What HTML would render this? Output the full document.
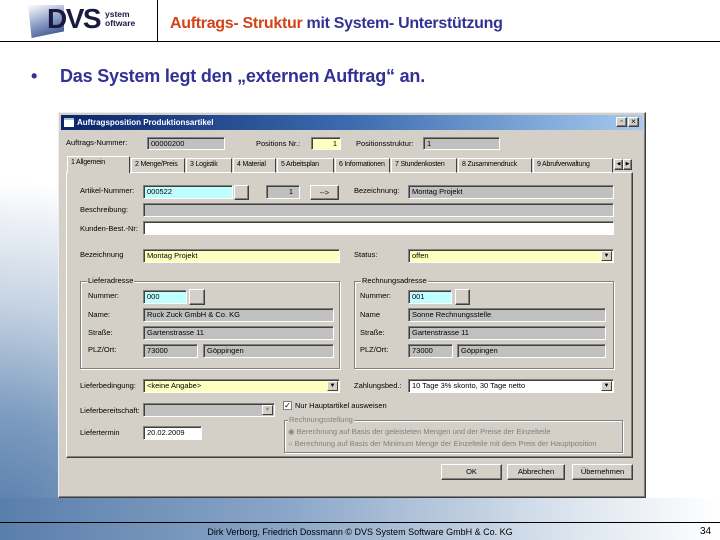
<!DOCTYPE html>
<html><head><meta charset="utf-8"><style>
*{margin:0;padding:0;box-sizing:border-box}
body{width:720px;height:540px;position:relative;overflow:hidden;background:#fff;font-family:"Liberation Sans",sans-serif}
.a{position:absolute}
.bg1{left:0;top:180px;width:320px;height:360px;background:radial-gradient(ellipse 100% 100% at 0% 100%,#4f78a8 0%,#7d9cc0 35%,#c4d2e2 65%,rgba(255,255,255,0) 100%)}
.bg2{left:0;top:498px;width:720px;height:42px;background:linear-gradient(90deg,#5a7eab 0%,#8aa6c8 40%,#dde6ef 80%,#fff 100%)}
.dlg{left:58px;top:112px;width:588px;height:386px;background:#d4d0c8;border:1px solid;border-color:#eee #404040 #404040 #eee;box-shadow:inset -1px -1px #808080}
.tb{left:61px;top:115px;width:582px;height:15px;background:linear-gradient(90deg,#0a246a,#3c6cb0 50%,#a6caf0)}
.t{font-size:7.5px;color:#000;white-space:nowrap;line-height:10px}
.f{position:absolute;border:1px solid;border-color:#808080 #fff #fff #808080;box-shadow:inset 1px 1px #404040;font-size:7.5px;line-height:11px;padding-left:3px;white-space:nowrap;overflow:hidden}
.g{background:#c0c0c0}.y{background:#ffffc0}.c{background:#c0ffff}.w{background:#fff}
.b{position:absolute;background:#d4d0c8;border:1px solid;border-color:#fff #404040 #404040 #fff;box-shadow:inset -1px -1px #808080;font-size:7.5px;text-align:center;line-height:13px}
.dd{position:absolute;right:1px;top:1px;width:11px;bottom:1px;background:#d4d0c8;border:1px solid;border-color:#fff #404040 #404040 #fff;font-size:6px;text-align:center;line-height:9px}
.grp{position:absolute;border:1px solid #808080;box-shadow:1px 1px #fff, inset 1px 1px #fff}
.gl{position:absolute;top:-6px;left:6px;background:#d4d0c8;padding:0 1px;font-size:7.5px;line-height:10px}
.tab{position:absolute;top:158px;height:15px;border:1px solid;border-color:#fff #404040 transparent #fff;font-size:7px;line-height:12px;padding-left:3px;white-space:nowrap;overflow:hidden;letter-spacing:-0.2px}
</style></head><body>
<div class="a bg1"></div><div class="a bg2"></div>
<!-- header -->
<div class="a" style="left:28px;top:5px;width:36px;height:33px;background:linear-gradient(160deg,#fff,#8094c0 55%,#2a3f80);clip-path:polygon(0 0,100% 0,100% 80%,10% 100%)"></div>
<div class="a" style="left:47px;top:4px;font:bold 28px/30px 'Liberation Sans',sans-serif;color:#1a1a40;letter-spacing:-1.5px">DVS</div>
<div class="a" style="left:105px;top:10px;font:bold 8.5px/9px 'Liberation Sans',sans-serif;color:#1a1a40">ystem<br>oftware</div>
<div class="a" style="left:157px;top:0;width:1px;height:42px;background:#000"></div>
<div class="a" style="left:0;top:41px;width:720px;height:1px;background:#000"></div>
<div class="a" style="left:170px;top:14px;font:bold 16px/20px 'Liberation Sans',sans-serif;color:#323296;letter-spacing:-0.3px"><span style="color:#d44218">Auftrags- Struktur</span> mit System- Unterstützung</div>
<div class="a" style="left:31px;top:64px;font:bold 18px/24px 'Liberation Sans',sans-serif;color:#323296">•</div>
<div class="a" style="left:60px;top:64px;font:bold 18px/24px 'Liberation Sans',sans-serif;color:#323296;letter-spacing:-0.2px">Das System legt den „externen Auftrag“ an.</div>
<!-- footer -->
<div class="a" style="left:0;top:522px;width:720px;height:1px;background:#000"></div>
<div class="a" style="left:0;top:526px;width:720px;text-align:center;font:9px/12px 'Liberation Sans',sans-serif;color:#000">Dirk Verborg, Friedrich Dossmann © DVS System Software GmbH &amp; Co. KG</div>
<div class="a" style="left:700px;top:526px;font:10px/12px 'Liberation Sans',sans-serif">34</div>
<!-- dialog -->
<div class="a dlg"></div>
<div class="a tb"></div>
<div class="a" style="left:64px;top:118px;width:10px;height:9px;background:#fff;border-top:2px solid #9cc"></div>
<div class="a" style="left:77px;top:116px;font:bold 8px/13px 'Liberation Sans',sans-serif;color:#fff">Auftragsposition Produktionsartikel</div>
<div class="b" style="left:616px;top:117px;width:11px;height:10px;line-height:8px;font-size:7px">▫</div>
<div class="b" style="left:628px;top:117px;width:11px;height:10px;line-height:8px;font-size:8px">×</div>
<div class="a t" style="left:66px;top:138px">Auftrags-Nummer:</div>
<div class="f g" style="left:147px;top:137px;width:78px;height:13px">00000200</div>
<div class="a t" style="left:256px;top:139px">Positions Nr.:</div>
<div class="f y" style="left:311px;top:137px;width:30px;height:13px;text-align:right;padding-right:3px">1</div>
<div class="a t" style="left:356px;top:139px">Positionsstruktur:</div>
<div class="f g" style="left:423px;top:137px;width:77px;height:13px">1</div>
<!-- tabs -->
<div class="a" style="left:66px;top:172px;width:567px;height:286px;border:1px solid;border-color:#fff #404040 #404040 #fff;box-shadow:inset -1px -1px #808080"></div>
<div class="tab" style="left:67px;top:156px;height:17px;width:63px;background:#d4d0c8;border-bottom:none;z-index:2">1 Allgemein</div>
<div class="tab" style="left:131px;width:54px">2 Menge/Preis</div>
<div class="tab" style="left:186px;width:46px">3 Logistik</div>
<div class="tab" style="left:233px;width:43px">4 Material</div>
<div class="tab" style="left:277px;width:57px">5 Arbeitsplan</div>
<div class="tab" style="left:335px;width:55px">6 Informationen</div>
<div class="tab" style="left:391px;width:66px">7 Stundenkosten</div>
<div class="tab" style="left:458px;width:74px">8 Zusammendruck</div>
<div class="tab" style="left:533px;width:80px">9 Abrufverwaltung</div>
<div class="b" style="left:614px;top:159px;width:9px;height:11px;font-size:5px;line-height:9px">◀</div>
<div class="b" style="left:623px;top:159px;width:9px;height:11px;font-size:5px;line-height:9px">▶</div>
<!-- rows -->
<div class="a t" style="left:80px;top:186px">Artikel-Nummer:</div>
<div class="f c" style="left:143px;top:185px;width:90px;height:14px">000522</div>
<div class="b" style="left:234px;top:185px;width:15px;height:15px"></div>
<div class="f g" style="left:266px;top:185px;width:34px;height:14px;text-align:right;padding-right:6px">1</div>
<div class="b" style="left:310px;top:185px;width:29px;height:15px">--&gt;</div>
<div class="a t" style="left:354px;top:186px">Bezeichnung:</div>
<div class="f g" style="left:408px;top:185px;width:206px;height:14px">Montag Projekt</div>
<div class="a t" style="left:80px;top:205px">Beschreibung:</div>
<div class="f g" style="left:143px;top:203px;width:471px;height:14px"></div>
<div class="a t" style="left:80px;top:224px">Kunden-Best.-Nr:</div>
<div class="f w" style="left:143px;top:221px;width:471px;height:14px"></div>
<div class="a t" style="left:80px;top:250px">Bezeichnung</div>
<div class="f y" style="left:143px;top:249px;width:197px;height:14px">Montag Projekt</div>
<div class="a t" style="left:354px;top:250px">Status:</div>
<div class="f y" style="left:408px;top:249px;width:206px;height:14px">offen<div class="dd">▼</div></div>
<!-- groups -->
<div class="grp" style="left:80px;top:281px;width:260px;height:88px"><div class="gl">Lieferadresse</div></div>
<div class="grp" style="left:354px;top:281px;width:260px;height:88px"><div class="gl">Rechnungsadresse</div></div>
<div class="a t" style="left:88px;top:291px">Nummer:</div>
<div class="f c" style="left:143px;top:290px;width:44px;height:14px">000</div>
<div class="b" style="left:189px;top:289px;width:16px;height:16px"></div>
<div class="a t" style="left:88px;top:310px">Name:</div>
<div class="f g" style="left:143px;top:308px;width:191px;height:14px">Ruck Zuck GmbH &amp; Co. KG</div>
<div class="a t" style="left:88px;top:328px">Straße:</div>
<div class="f g" style="left:143px;top:326px;width:191px;height:14px">Gartenstrasse 11</div>
<div class="a t" style="left:88px;top:345px">PLZ/Ort:</div>
<div class="f g" style="left:143px;top:344px;width:55px;height:14px">73000</div>
<div class="f g" style="left:203px;top:344px;width:131px;height:14px">Göppingen</div>
<div class="a t" style="left:360px;top:291px">Nummer:</div>
<div class="f c" style="left:408px;top:290px;width:44px;height:14px">001</div>
<div class="b" style="left:455px;top:289px;width:15px;height:16px"></div>
<div class="a t" style="left:360px;top:310px">Name</div>
<div class="f g" style="left:408px;top:308px;width:198px;height:14px">Sonne Rechnungsstelle</div>
<div class="a t" style="left:360px;top:328px">Straße:</div>
<div class="f g" style="left:408px;top:326px;width:198px;height:14px">Gartenstrasse 11</div>
<div class="a t" style="left:360px;top:345px">PLZ/Ort:</div>
<div class="f g" style="left:408px;top:344px;width:45px;height:14px">73000</div>
<div class="f g" style="left:457px;top:344px;width:149px;height:14px">Göppingen</div>
<!-- lower -->
<div class="a t" style="left:80px;top:381px">Lieferbedingung:</div>
<div class="f y" style="left:143px;top:379px;width:197px;height:14px">&lt;keine Angabe&gt;<div class="dd">▼</div></div>
<div class="a t" style="left:354px;top:381px">Zahlungsbed.:</div>
<div class="f w" style="left:408px;top:379px;width:206px;height:14px">10 Tage 3% skonto, 30 Tage netto<div class="dd">▼</div></div>
<div class="a t" style="left:80px;top:406px">Lieferbereitschaft:</div>
<div class="f g" style="left:143px;top:403px;width:132px;height:14px"><div class="dd" style="color:#888">▼</div></div>
<div class="a" style="left:283px;top:401px;width:9px;height:9px;background:#fff;border:1px solid #808080;font-size:8px;line-height:7px;text-align:center">✓</div>
<div class="a t" style="left:295px;top:401px">Nur Hauptartikel ausweisen</div>
<div class="grp" style="left:284px;top:420px;width:339px;height:33px"><div class="gl" style="color:#808080;left:3px">Rechnungsstellung</div></div>
<div class="a t" style="left:288px;top:427px;color:#808080">◉ Berechnung auf Basis der geleisteten Mengen und der Preise der Einzelteile</div>
<div class="a t" style="left:288px;top:439px;color:#808080">○ Berechnung auf Basis der Minimum Menge der Einzelteile mit dem Preis der Hauptposition</div>
<div class="a t" style="left:80px;top:428px">Liefertermin</div>
<div class="f w" style="left:143px;top:426px;width:59px;height:14px">20.02.2009</div>
<div class="b" style="left:441px;top:464px;width:61px;height:16px">OK</div>
<div class="b" style="left:507px;top:464px;width:58px;height:16px">Abbrechen</div>
<div class="b" style="left:572px;top:464px;width:61px;height:16px">Übernehmen</div>
</body></html>
